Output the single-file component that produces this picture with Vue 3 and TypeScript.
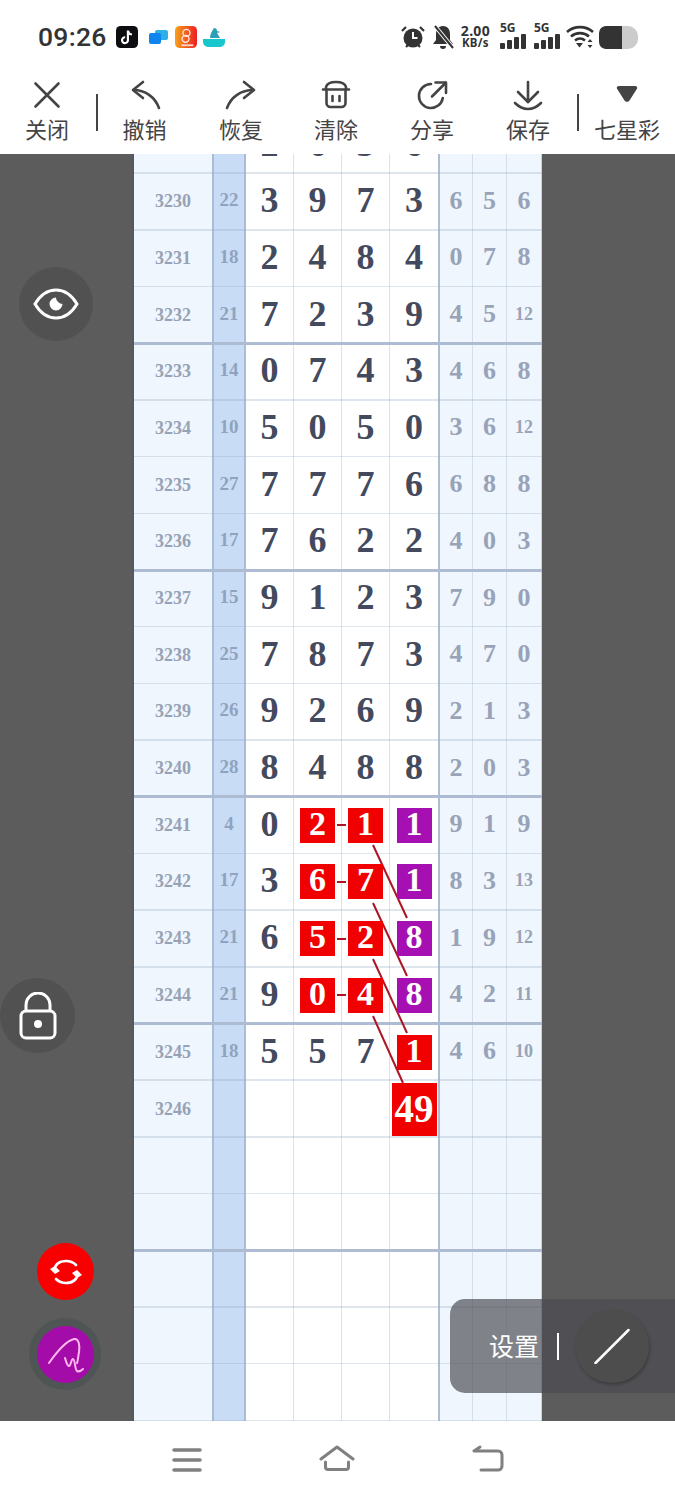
<script setup lang="ts">
interface Row {
  id: string
  sum: string
  main: string[]
  side: string[]
  major?: boolean
  boxes?: Record<number, string>
}
const R = 'red'
const P = 'purple'
const rows: Row[] = [
  { id: '3230', sum: '22', main: ['3', '9', '7', '3'], side: ['6', '5', '6'] },
  { id: '3231', sum: '18', main: ['2', '4', '8', '4'], side: ['0', '7', '8'] },
  { id: '3232', sum: '21', main: ['7', '2', '3', '9'], side: ['4', '5', '12'], major: true },
  { id: '3233', sum: '14', main: ['0', '7', '4', '3'], side: ['4', '6', '8'] },
  { id: '3234', sum: '10', main: ['5', '0', '5', '0'], side: ['3', '6', '12'] },
  { id: '3235', sum: '27', main: ['7', '7', '7', '6'], side: ['6', '8', '8'] },
  { id: '3236', sum: '17', main: ['7', '6', '2', '2'], side: ['4', '0', '3'], major: true },
  { id: '3237', sum: '15', main: ['9', '1', '2', '3'], side: ['7', '9', '0'] },
  { id: '3238', sum: '25', main: ['7', '8', '7', '3'], side: ['4', '7', '0'] },
  { id: '3239', sum: '26', main: ['9', '2', '6', '9'], side: ['2', '1', '3'] },
  { id: '3240', sum: '28', main: ['8', '4', '8', '8'], side: ['2', '0', '3'], major: true },
  { id: '3241', sum: '4', main: ['0', '2', '1', '1'], side: ['9', '1', '9'], boxes: { 1: R, 2: R, 3: P } },
  { id: '3242', sum: '17', main: ['3', '6', '7', '1'], side: ['8', '3', '13'], boxes: { 1: R, 2: R, 3: P } },
  { id: '3243', sum: '21', main: ['6', '5', '2', '8'], side: ['1', '9', '12'], boxes: { 1: R, 2: R, 3: P } },
  { id: '3244', sum: '21', main: ['9', '0', '4', '8'], side: ['4', '2', '11'], boxes: { 1: R, 2: R, 3: P }, major: true },
  { id: '3245', sum: '18', main: ['5', '5', '7', '1'], side: ['4', '6', '10'], boxes: { 3: R } },
  { id: '3246', sum: '', main: ['', '', '', '49'], side: ['', '', ''], boxes: { 3: 'big' } },
  { id: '', sum: '', main: ['', '', '', ''], side: ['', '', ''] },
  { id: '', sum: '', main: ['', '', '', ''], side: ['', '', ''], major: true },
  { id: '', sum: '', main: ['', '', '', ''], side: ['', '', ''] },
  { id: '', sum: '', main: ['', '', '', ''], side: ['', '', ''] },
  { id: '', sum: '', main: ['', '', '', ''], side: ['', '', ''] },
]
const partial = ['2', '6', '3', '6']
const links = [
  [203, 671, 212, 671],
  [203, 728, 212, 728],
  [203, 785, 212, 785],
  [203, 841, 212, 841],
  [239, 691, 273, 764],
  [239, 749, 273, 822],
  [239, 805, 273, 879],
  [239, 862, 269, 929],
]
const tools = ['关闭', '撤销', '恢复', '清除', '分享', '保存', '七星彩']
</script>

<template>
  <div class="page">
    <header class="status">
      <span class="time">09:26</span>
      <div class="apps">
        <svg width="22" height="22" viewBox="0 0 24 24">
          <rect width="24" height="24" rx="5" fill="#0d0d12" />
          <path d="M13 5v10.500a3.200 3.200 0 1 1-3-3.200M13 5c.4 2.600 2 4 4.400 4.300" fill="none" stroke="#fff" stroke-width="2.400" />
        </svg>
        <svg class="msg" width="24" height="22" viewBox="0 0 24 22">
          <rect x="9" y="4" width="13" height="10" rx="2" fill="#2bb0e8" />
          <rect x="3" y="7" width="12" height="11" rx="2" fill="#0d84ee" />
        </svg>
        <svg width="22" height="22" viewBox="0 0 24 24">
          <defs>
            <linearGradient id="pdd" x1="0" y1="0" x2="1" y2="0">
              <stop offset="0" stop-color="#f7a21b" />
              <stop offset="1" stop-color="#ee1d23" />
            </linearGradient>
          </defs>
          <rect width="24" height="24" rx="5" fill="url(#pdd)" />
          <circle cx="12.500" cy="7.500" r="3.800" fill="none" stroke="#ffe9df" stroke-width="1.500" />
          <circle cx="11.500" cy="14" r="3.800" fill="none" stroke="#ffe9df" stroke-width="1.500" />
          <rect x="7" y="20" width="13" height="2" fill="#ffd6c8" />
        </svg>
        <svg width="24" height="22" viewBox="0 0 24 22">
          <path d="M1 13h22v3c0 3-3 5-6 5H7c-3 0-6-2-6-5z" fill="#18c6cc" />
          <path d="M8 12c0-4 2-7 4-10 2 0 3 1 3 3l3 1-3 1 3 5z" fill="#2a9fb5" />
        </svg>
      </div>
      <div class="sys">
        <svg width="26" height="26" viewBox="0 0 26 26">
          <circle cx="13" cy="14" r="9.500" fill="#333" />
          <path d="M13 8v6h4.500" fill="none" stroke="#fff" stroke-width="2" />
          <path d="M2 7l4-4M24 7l-4-4M6 23l2-2M20 23l-2-2" stroke="#333" stroke-width="2.200" />
        </svg>
        <svg width="24" height="26" viewBox="0 0 24 26">
          <path d="M12 2c5 0 7 4 7 8v6l3 4H2l3-4v-6c0-4 2-8 7-8zM9 22h6a3 3 0 0 1-6 0z" fill="#333" />
          <path d="M4 2l18 22" stroke="#fff" stroke-width="4" />
          <path d="M4 2l18 22" stroke="#333" stroke-width="2" />
        </svg>
        <div class="speed"><span>2.00</span><small>KB/s</small></div>
        <div class="signal">
          <span class="five">5G</span>
          <i class="b1" /><i class="b2" /><i class="b3" /><i class="b4" />
        </div>
        <div class="signal">
          <span class="five">5G</span>
          <i class="b1" /><i class="b2" /><i class="b3" /><i class="b4" />
        </div>
        <svg width="28" height="24" viewBox="0 0 28 24">
          <path d="M1 7c7-6.500 19-6.500 26 0M5 11.500c5-4.500 13-4.500 18 0M9 15.500c3-2.500 7-2.500 10 0" fill="none" stroke="#333" stroke-width="2.600" />
          <path d="M10 18h7l-3.500 4.500z" fill="#333" />
          <path d="M24 14l2.500 3h-5zM24 23l2.500-3h-5z" fill="#333" />
        </svg>
        <div class="battery"><span /></div>
      </div>
    </header>

    <nav class="toolbar">
      <div v-for="(t, i) in tools" :key="t" class="tool" :class="'tool-' + i">
        <svg class="ticon" width="32" height="32" viewBox="0 0 32 32">
          <g fill="none" stroke="#444" stroke-width="2.600" stroke-linecap="round" stroke-linejoin="round">
            <path v-if="i === 0" d="M4.500 4.500l23 23M27.500 4.500l-23 23" />
            <template v-else-if="i === 1">
              <path d="M14 3L4 11l10 8" />
              <path d="M4.500 11C16 11 26 18 30 29" />
            </template>
            <template v-else-if="i === 2">
              <path d="M19 3l10 8-10 8" />
              <path d="M28.500 11C16 11 6 18 2 29" />
            </template>
            <template v-else-if="i === 3">
              <path d="M6 10V8C7 4.500 11 3 16 3s9 1.500 10 5v2" />
              <path d="M3 10.500h26" />
              <path d="M6.500 10.500V24a4 4 0 0 0 4 4h11a4 4 0 0 0 4-4V10.500" />
              <path d="M12.500 17v5M19.500 17v5" />
            </template>
            <template v-else-if="i === 4">
              <path d="M26.800 19A12 12 0 1 1 15 5" />
              <path d="M16 17.500L29.500 4" />
              <path d="M19.500 3.500h10.500V14" />
            </template>
            <template v-else-if="i === 5">
              <path d="M16 3v20" />
              <path d="M6 13l10 10 10-10" />
              <path d="M3 24c4 4 8 6 13 6s9-2 13-6" />
            </template>
          </g>
          <path v-if="i === 6" d="M8 7h16c2 0 2.800 1.500 1.800 3l-7.300 11.500c-1.200 1.800-3.800 1.800-5 0L6.200 10C5.200 8.500 6 7 8 7z" fill="#444" />
        </svg>
        <span>{{ t }}</span>
      </div>
    </nav>

    <main class="workspace">
      <section class="chart">
        <div class="row partial">
          <div class="cell id" />
          <div class="cell sum" />
          <div v-for="(d, i) in partial" :key="i" class="cell digit"><span class="peek">{{ d }}</span></div>
          <div class="cell side first" />
          <div class="cell side" />
          <div class="cell side" />
        </div>
        <div v-for="(r, n) in rows" :key="n" class="row" :class="{ major: r.major }">
          <div class="cell id">{{ r.id }}</div>
          <div class="cell sum">{{ r.sum }}</div>
          <div v-for="(d, i) in r.main" :key="i" class="cell digit">
            <span v-if="r.boxes && r.boxes[i]" class="box" :class="r.boxes[i]">{{ d }}</span>
            <template v-else>{{ d }}</template>
          </div>
          <div
            v-for="(s, i) in r.side"
            :key="'s' + i"
            class="cell side"
            :class="{ first: i === 0, small: s.length > 1 }"
          >{{ s }}</div>
        </div>
        <svg class="links" width="408" height="1267" viewBox="0 0 408 1267">
          <line
            v-for="(l, i) in links"
            :key="i"
            :x1="l[0]"
            :y1="l[1]"
            :x2="l[2]"
            :y2="l[3]"
            stroke="#ad1424"
            stroke-width="2"
          />
        </svg>
      </section>
    </main>

    <footer class="nav">
      <svg width="30" height="26" viewBox="0 0 30 26">
        <path d="M2 3h26M2 13h26M2 23h26" stroke="#808080" stroke-width="3.500" stroke-linecap="round" />
      </svg>
      <svg class="lift" width="36" height="28" viewBox="0 0 36 28">
        <path d="M2 14L18 2l16 12" fill="none" stroke="#808080" stroke-width="3" stroke-linecap="round" stroke-linejoin="round" />
        <path d="M6.500 17v5a2.500 2.500 0 0 0 2.500 2.500h18a2.500 2.500 0 0 0 2.500-2.500v-5" fill="none" stroke="#808080" stroke-width="3" stroke-linecap="round" />
      </svg>
      <svg class="lift" width="32" height="28" viewBox="0 0 32 28">
        <path d="M8 2L2 6h24a4 4 0 0 1 4 4v11a4 4 0 0 1-4 4H9" fill="none" stroke="#808080" stroke-width="3" stroke-linecap="round" stroke-linejoin="round" />
      </svg>
    </footer>

    <button class="fab eye">
      <svg width="46" height="34" viewBox="0 0 46 34">
        <path d="M2 17C8 7 15 3 23 3s15 4 21 14c-6 10-13 14-21 14S8 27 2 17z" fill="none" stroke="#fff" stroke-width="3" />
        <path d="M23 10.500a6.500 6.500 0 1 0 6.500 6.500c-3 0-6.500-3-6.500-6.500z" fill="#fff" />
      </svg>
    </button>
    <button class="fab lock">
      <svg width="38" height="48" viewBox="0 0 38 48">
        <path d="M7 19v-6a12 12 0 0 1 24 0v6" fill="none" stroke="#fff" stroke-width="3" />
        <rect x="2" y="19" width="34" height="27" rx="5" fill="none" stroke="#fff" stroke-width="3" />
        <circle cx="19" cy="32" r="4" fill="#fff" />
      </svg>
    </button>
    <button class="fab sync">
      <svg width="32" height="28" viewBox="0 0 32 28">
        <g fill="none" stroke="#fff" stroke-width="2.600" stroke-linecap="round">
          <path d="M4 13C5 6 10 3 16 3c4 0 7 1 10 4" />
          <path d="M28 15c-1 7-6 10-12 10-4 0-7-1-10-4" />
        </g>
        <path d="M0 11l5-3 5 5-5 3zM32 17l-5 3-5-5 5-3z" fill="#fff" />
      </svg>
    </button>
    <div class="pen-ring">
      <button class="fab pen">
        <svg width="38" height="40" viewBox="0 0 38 40">
          <path d="M2 28C9 18 19 6 27 4c5-1 6 7 5 13-1 5-1 9-2 11M18 23c1 3 2 8 4 8s2-7 4-7 2 11 4 12 4 0 6-2" fill="none" stroke="#ffb7ec" stroke-width="2" stroke-linecap="round" stroke-linejoin="round" />
        </svg>
      </button>
    </div>

    <aside class="settings">
      <span class="label">设置</span>
      <i class="bar" />
      <button class="slash">
        <svg width="36" height="36" viewBox="0 0 36 36">
          <path d="M1.500 35L34.500 2" stroke="#fff" stroke-width="2.500" stroke-linecap="round" />
        </svg>
      </button>
    </aside>
  </div>
</template>

<style>
html,
body {
  margin: 0;
  background: #fff;
}
</style>

<style scoped>
.page {
  position: relative;
  width: 675px;
  height: 1500px;
  overflow: hidden;
  display: flex;
  flex-direction: column;
  background: #fff;
  font-family: 'Noto Sans CJK SC', 'Noto Sans', sans-serif;
}
.status {
  height: 70px;
  flex: none;
  display: flex;
  align-items: center;
  padding: 4px 37px 0 38px;
  box-sizing: border-box;
  color: #333;
}
.time {
  font: 500 26.500px/1 Roboto, sans-serif;
  letter-spacing: 0.3px;
}
.apps {
  display: flex;
  align-items: center;
  gap: 5px;
  margin-left: 9px;
}
.msg {
  margin-left: 3px;
}
.sys {
  margin-left: auto;
  display: flex;
  align-items: center;
  gap: 5px;
}
.speed {
  display: flex;
  flex-direction: column;
  align-items: center;
  font: 700 14px/12px 'Noto Sans', sans-serif;
  color: #333;
  margin: 0 3px 0 1px;
  letter-spacing: 0.3px;
}
.speed small {
  font-size: 11.500px;
}
.signal {
  position: relative;
  width: 27px;
  height: 24px;
  display: flex;
  align-items: flex-end;
  gap: 2px;
  margin-left: 2px;
}
.signal i {
  width: 5px;
  background: #333;
  border-radius: 1px;
}
.signal .five {
  position: absolute;
  left: 0;
  top: -3px;
  font: 700 12px/12px 'Noto Sans', sans-serif;
}
.b1 {
  height: 6px;
}
.b2 {
  height: 9px;
}
.b3 {
  height: 12px;
}
.b4 {
  height: 15px;
}
.battery {
  width: 39px;
  height: 23px;
  border-radius: 7px 10px 10px 7px;
  background: #ccc;
  overflow: hidden;
}
.battery span {
  display: block;
  width: 23px;
  height: 100%;
  background: #333;
  border-radius: 6px 0 0 6px;
}
.toolbar {
  position: relative;
  height: 84px;
  flex: none;
  display: grid;
  grid-template-columns: 94px 100px 94px 96px 96px 96px 99px;
}
.tool {
  position: relative;
  display: flex;
  flex-direction: column;
  align-items: center;
  color: #444;
  font-size: 22px;
  line-height: 30px;
}
.ticon {
  margin-top: 9px;
  margin-bottom: 2px;
  flex: none;
}
.tool-1 {
  padding-left: 1px;
}
.tool-6 {
  padding-left: 3px;
}
.tool-0::after,
.tool-5::after {
  content: '';
  position: absolute;
  top: 24px;
  width: 2px;
  height: 37px;
  background: #444;
}
.tool-0::after {
  right: -4px;
}
.tool-5::after {
  right: -3px;
}
.workspace {
  height: 1267px;
  flex: none;
  display: flex;
  justify-content: center;
  background: #5c5c5c;
}
.chart {
  position: relative;
  width: 408px;
  margin-left: 1px;
  overflow: hidden;
  box-shadow: -2px 0 0 #53595d;
}
.row {
  position: relative;
  display: grid;
  grid-template-columns: 78px 34px 48px 48px 48px 48px 35px 34px 35px;
  height: 56.700px;
  background: #fff;
}
.row.partial {
  height: 19.400px;
}
.row::after {
  content: '';
  position: absolute;
  z-index: 1;
  left: 0;
  right: 0;
  bottom: -0.500px;
  height: 1.500px;
  background: rgba(150, 170, 195, 0.3);
}
.row.major::after {
  bottom: -1.500px;
  height: 3px;
  background: #adbbd3;
}
.cell {
  box-sizing: border-box;
  min-width: 0;
  display: flex;
  align-items: center;
  justify-content: center;
  font-family: 'Liberation Serif', serif;
  font-weight: 700;
  padding-bottom: 3px;
}
.id {
  background: #eff6fe;
  color: #98a2b5;
  font-size: 18px;
  padding-bottom: 0;
}
.sum {
  background: #c9dcf5;
  border-left: 2px solid #a9bdd8;
  border-right: 2px solid #a9bdd8;
  color: #8fa3bf;
  font-size: 19px;
}
.digit {
  border-right: 1.500px solid #dde2e9;
  color: #444a5d;
  font-size: 36px;
}
.digit:nth-child(6) {
  border-right: 0;
}
.side {
  background: #eff6fe;
  border-right: 1.500px solid #d5dfeb;
  color: #98a3b7;
  font-size: 26px;
  padding-bottom: 2px;
}
.side.first {
  border-left: 2px solid #aebdd0;
}
.side:last-child {
  border-right: 1.500px solid #c7d2e0;
}
.side.small {
  font-size: 18px;
}
.partial .cell {
  padding: 0;
  align-items: flex-start;
  overflow: hidden;
}
.peek {
  display: block;
  margin-top: -30px;
  line-height: 40px;
}
.box {
  position: relative;
  z-index: 2;
  box-sizing: border-box;
  width: 35px;
  height: 35px;
  margin-top: 3px;
  padding-bottom: 3px;
  display: flex;
  align-items: center;
  justify-content: center;
  color: #fff;
  background: #f00000;
  font-size: 34px;
}
.box.purple {
  background: #a60fb2;
}
.box.big {
  width: 45px;
  height: 53px;
  font-size: 39px;
  margin-top: 3px;
}
.links {
  position: absolute;
  left: 0;
  top: 0;
  z-index: 1;
  pointer-events: none;
}
.nav {
  flex: 1;
  display: grid;
  grid-template-columns: 30px 36px 32px;
  justify-content: start;
  column-gap: 117px;
  padding: 26px 0 0 172px;
  align-content: start;
  background: #fff;
}
.lift {
  margin-top: -2px;
}
.fab {
  position: absolute;
  border: 0;
  padding: 0;
  border-radius: 50%;
  display: flex;
  align-items: center;
  justify-content: center;
}
.eye {
  left: 19px;
  top: 267px;
  width: 74px;
  height: 74px;
  background: #515151;
}
.lock {
  left: 0;
  top: 978px;
  width: 75px;
  height: 75px;
  background: #515151;
}
.sync {
  left: 37px;
  top: 1243px;
  width: 57px;
  height: 57px;
  background: #f90000;
}
.pen-ring {
  position: absolute;
  left: 29px;
  top: 1318px;
  width: 72px;
  height: 72px;
  border-radius: 50%;
  background: #4f5554;
}
.pen {
  left: 8px;
  top: 8px;
  width: 57px;
  height: 57px;
  background: #a30ca8;
}
.settings {
  position: absolute;
  z-index: 3;
  left: 450px;
  top: 1299px;
  width: 225px;
  height: 94px;
  box-sizing: border-box;
  padding-left: 39px;
  display: flex;
  align-items: center;
  border-radius: 15px 0 0 15px;
  background: rgba(74, 74, 80, 0.675);
}
.label {
  color: #fff;
  font-size: 25px;
  line-height: 1;
  margin-top: -2px;
}
.bar {
  width: 2px;
  height: 27px;
  margin-left: 18px;
  background: #fff;
}
.slash {
  margin-left: 16px;
  width: 74px;
  height: 74px;
  padding: 0;
  border: 0;
  border-radius: 50%;
  background: #4d4d4d;
  box-shadow: 1px 2px 3px rgba(0, 0, 0, 0.25);
  display: flex;
  align-items: center;
  justify-content: center;
}
</style>
